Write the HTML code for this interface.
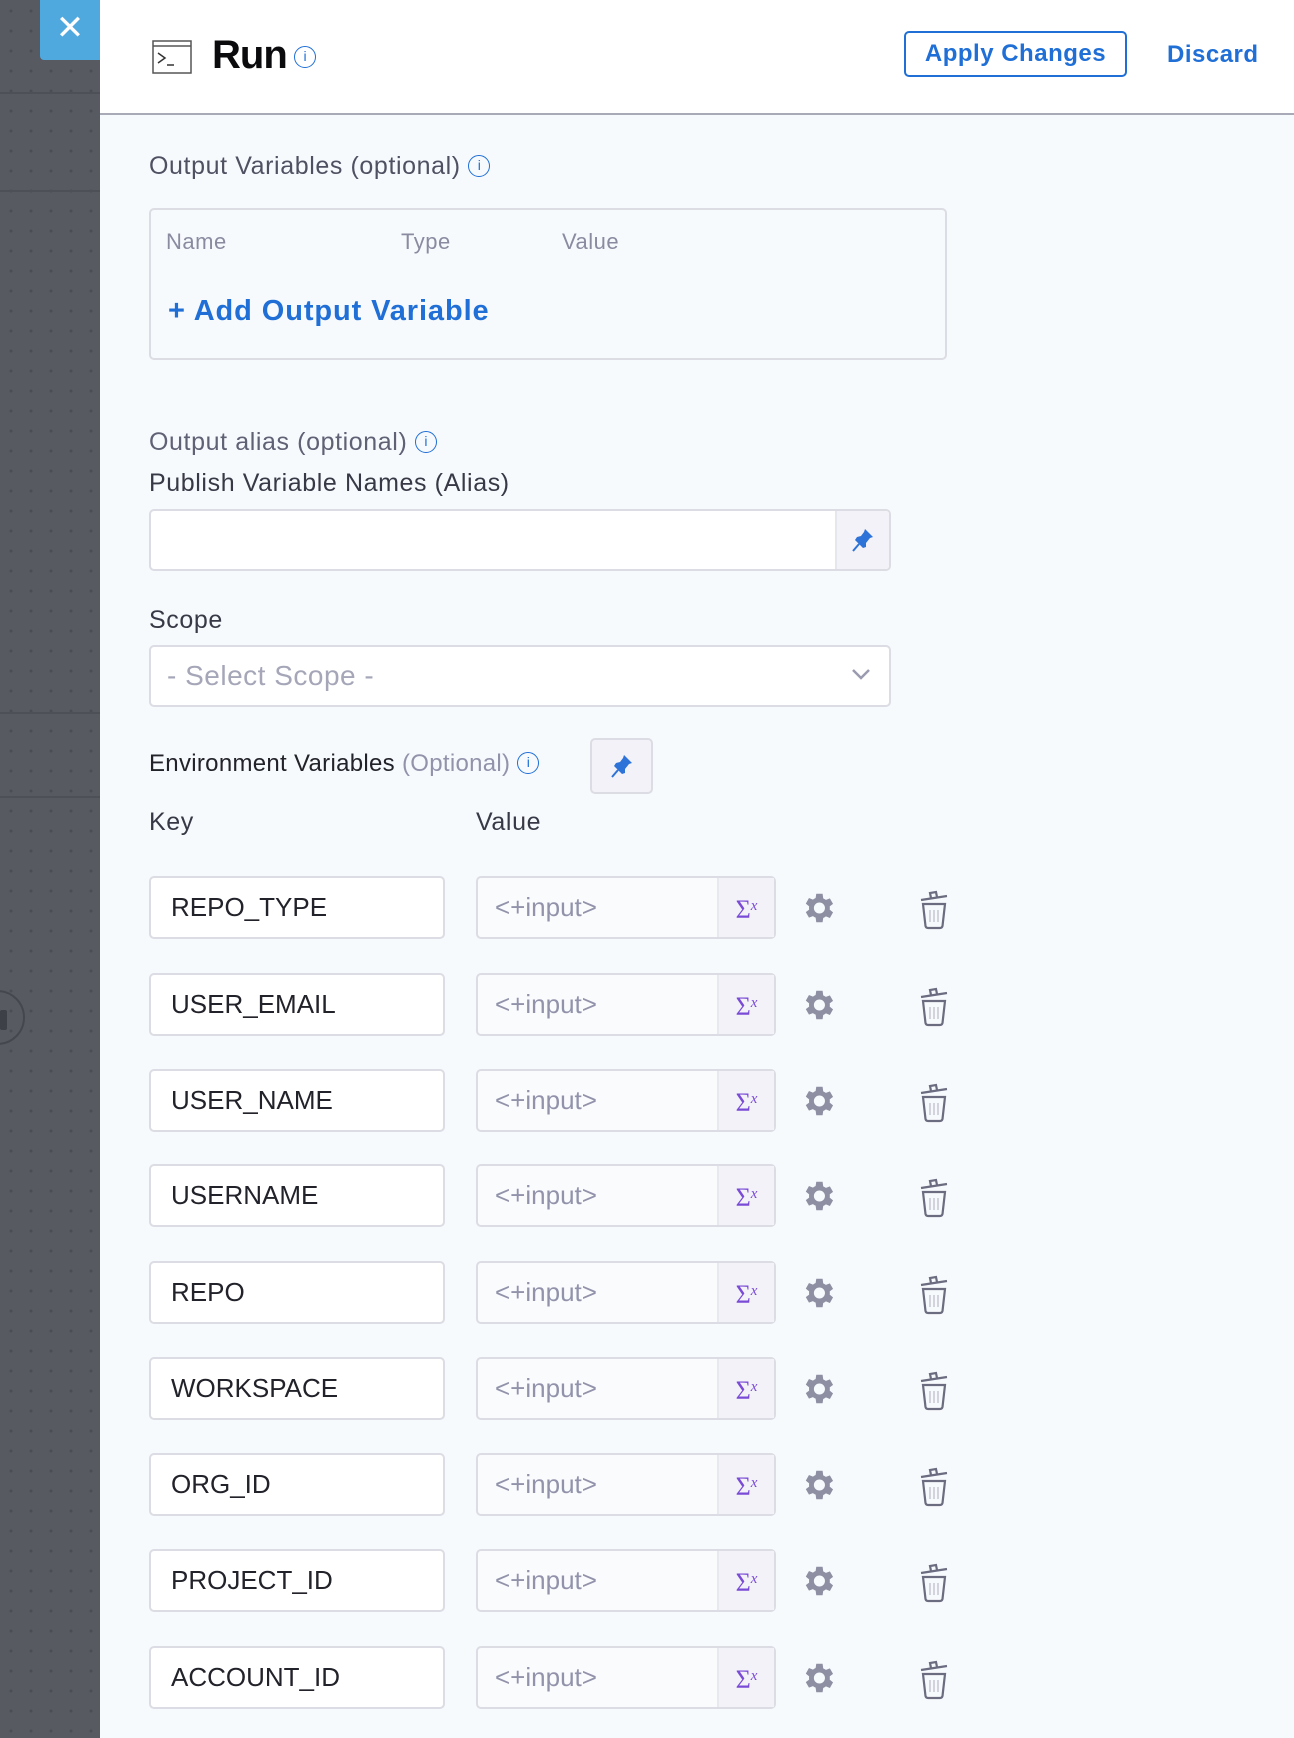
<!DOCTYPE html>
<html><head><meta charset="utf-8"><style>
*{box-sizing:border-box;margin:0;padding:0}
body{width:1294px;height:1738px;overflow:hidden;font-family:"Liberation Sans",sans-serif;background:#f7fafd;position:relative}
.l{position:absolute;left:0;top:0;width:100px;height:1738px;background-color:#575b61;background-image:radial-gradient(circle,#4a4e54 1.3px,transparent 1.6px);background-size:20px 20px;background-position:1px 1px}
.hl{position:absolute;left:0;width:100px;height:2px;background:#4d5157}
.x{position:absolute;left:40px;top:0;width:60px;height:60px;background:#4fa8de;border-radius:0 0 0 4px;color:#fff;font-size:34px;text-align:center;line-height:56px}
.hd{position:absolute;left:100px;top:0;width:1194px;height:115px;background:#fff;border-bottom:2px solid #a9aab8}
.a{position:absolute;white-space:nowrap}
.lab{font-size:25px;color:#4f5162;letter-spacing:0.6px}
.info{display:inline-block;width:22px;height:22px;border:1.6px solid #1f6fd6;border-radius:50%;color:#1f6fd6;font-size:14px;text-align:center;line-height:19px;vertical-align:4px;letter-spacing:0}
.box{position:absolute;border:2px solid #dcdce4;border-radius:5px;background:#fff}
.key{position:absolute;left:149px;width:296px;height:63px;border:2px solid #dcdce4;border-radius:5px;background:#fff;font-size:26px;color:#22222a;padding-left:20px;line-height:59px}
.val{position:absolute;left:476px;width:300px;height:63px;border:2px solid #dcdce4;border-radius:5px;background:#fafbfd;font-size:26px;color:#9293ab;padding-left:17px;line-height:59px}
.val .s{position:absolute;right:0;top:0;width:57px;height:59px;background:#f3f2f8;border-left:2px solid #e8e8ef;color:#7a4bd6;font-family:"Liberation Serif",serif;font-size:26px;text-align:center;line-height:57px}
.val .s i{font-size:15px;vertical-align:8px}
.g{position:absolute;left:799px}
.t{position:absolute;left:918px}
</style></head><body>
<div class="l"></div>
<div class="hl" style="top:92px"></div><div class="hl" style="top:190px"></div><div class="hl" style="top:712px"></div><div class="hl" style="top:796px"></div>
<div style="position:absolute;left:-30px;top:990px;width:55px;height:55px;border:2px solid #44484e;border-radius:50%"></div>
<div style="position:absolute;left:0;top:1010px;width:7px;height:20px;background:#3d4047;border-radius:2px"></div>
<div class="x">✕</div>
<div class="hd"></div>
<svg class="a" style="left:152px;top:40px" width="40" height="34" viewBox="0 0 40 34"><rect x="1" y="1" width="38" height="32" fill="#fff" stroke="#555" stroke-width="1.5"/><line x1="1" y1="6" x2="39" y2="6" stroke="#555" stroke-width="1.5"/><path d="M6 13 L13 18 L6 23" fill="none" stroke="#333" stroke-width="1.5"/><line x1="15" y1="25" x2="22" y2="25" stroke="#333" stroke-width="1.5"/></svg>
<div class="a" style="left:212px;top:33px;font-size:40px;font-weight:bold;color:#0b0b0d;letter-spacing:-1px">Run</div>
<div class="a" style="left:294px;top:46px"><span class="info">i</span></div>
<div class="a" style="left:904px;top:31px;width:223px;height:46px;border:2px solid #1f6fd6;border-radius:5px;color:#1f6fd6;font-size:24px;font-weight:bold;text-align:center;line-height:41px;background:#fff;letter-spacing:0.5px">Apply Changes</div>
<div class="a" style="left:1167px;top:41px;color:#1f6fd6;font-size:24px;font-weight:bold;letter-spacing:0.5px">Discard</div>

<div class="a lab" style="left:149px;top:152px">Output Variables (optional) <span class="info">i</span></div>
<div class="box" style="left:149px;top:208px;width:798px;height:152px;background:#f7fafd"></div>
<div class="a" style="left:166px;top:229px;font-size:22px;color:#8a8ba0;letter-spacing:0.5px">Name</div>
<div class="a" style="left:401px;top:229px;font-size:22px;color:#8a8ba0;letter-spacing:0.5px">Type</div>
<div class="a" style="left:562px;top:229px;font-size:22px;color:#8a8ba0;letter-spacing:0.5px">Value</div>
<div class="a" style="left:168px;top:295px;font-size:29px;font-weight:bold;color:#1f6fd6;letter-spacing:0.9px">+ Add Output Variable</div>

<div class="a lab" style="left:149px;top:428px;color:#5f6175">Output alias (optional) <span class="info">i</span></div>
<div class="a lab" style="left:149px;top:469px;color:#383946">Publish Variable Names (Alias)</div>
<div class="box" style="left:149px;top:509px;width:742px;height:62px"></div>
<div class="a" style="left:835px;top:511px;width:54px;height:58px;background:#f3f2f8;border-left:2px solid #e6e6ee;border-radius:0 4px 4px 0"></div>
<svg class="a" style="left:851px;top:527px" width="24" height="26" viewBox="0 0 24 26"><path d="M14 2 L22 10 L19 11 L15 16 L15 20 L12 21 L4 13 L6 10 L10 9 L13 5 Z" fill="#2e73d8"/><path d="M8 17 L2 24" stroke="#2e73d8" stroke-width="2"/></svg>
<div class="a lab" style="left:149px;top:606px;color:#383946">Scope</div>
<div class="box" style="left:149px;top:645px;width:742px;height:62px;font-size:28px;color:#a5a6b8;padding-left:16px;line-height:58px;letter-spacing:0.5px">- Select Scope -</div>
<svg class="a" style="left:851px;top:667px" width="20" height="14"><path d="M2 3 L10 11 L18 3" fill="none" stroke="#9a9bb0" stroke-width="2.5"/></svg>

<div class="a" style="left:149px;top:750px;font-size:24px;color:#22222a;letter-spacing:0.3px">Environment Variables <span style="color:#9293ab">(Optional)</span> <span class="info">i</span></div>
<div class="a" style="left:590px;top:738px;width:63px;height:56px;border:2px solid #dcdce4;border-radius:5px;background:#f3f2f8"></div>
<svg class="a" style="left:610px;top:753px" width="24" height="26" viewBox="0 0 24 26"><path d="M14 2 L22 10 L19 11 L15 16 L15 20 L12 21 L4 13 L6 10 L10 9 L13 5 Z" fill="#2e73d8"/><path d="M8 17 L2 24" stroke="#2e73d8" stroke-width="2"/></svg>
<div class="a lab" style="left:149px;top:808px;color:#383946">Key</div>
<div class="a lab" style="left:476px;top:808px;color:#383946">Value</div>

<div id="rows"></div>
<script>
var k=["REPO_TYPE","USER_EMAIL","USER_NAME","USERNAME","REPO","WORKSPACE","ORG_ID","PROJECT_ID","ACCOUNT_ID"],t=[876,973,1069,1164,1261,1357,1453,1549,1646],h="";
k.forEach(function(n,i){var y=t[i];
h+='<div class="key" style="top:'+y+'px">'+n+'</div><div class="val" style="top:'+y+'px">&lt;+input&gt;<div class="s">Σ<i>x</i></div></div>';
h+='<svg class="g" style="top:'+(y+13)+'px" width="38" height="38" viewBox="0 0 24 24"><path fill="#8e8fa3" d="M19.4 13a7.5 7.5 0 0 0 0-2l2.1-1.6-2-3.5-2.5 1a7 7 0 0 0-1.7-1L14.9 3h-4l-.4 2.7a7 7 0 0 0-1.7 1l-2.5-1-2 3.5L6.4 11a7.5 7.5 0 0 0 0 2l-2.1 1.6 2 3.5 2.5-1a7 7 0 0 0 1.7 1l.4 2.9h4l.4-2.7a7 7 0 0 0 1.7-1l2.5 1 2-3.5zM12.9 15.5a3.5 3.5 0 1 1 0-7 3.5 3.5 0 0 1 0 7z"/></svg>';
h+='<svg class="t" style="top:'+(y+12)+'px" width="32" height="42" viewBox="0 0 32 42"><g fill="none" stroke="#6b6c80" stroke-width="2.2"><path d="M3 12 L29 8"/><path d="M13 10 L12 5 L18 4 L19 9"/><path d="M5 16 L7.5 38 Q8 40 10 40 L22 40 Q24 40 24.5 38 L27 16 Z"/></g><g stroke="#c5c6d2" stroke-width="1.5"><path d="M12 22V34M16 22V34M20 22V34"/></g></svg>';});
document.getElementById("rows").innerHTML=h;
</script>
</body></html>
